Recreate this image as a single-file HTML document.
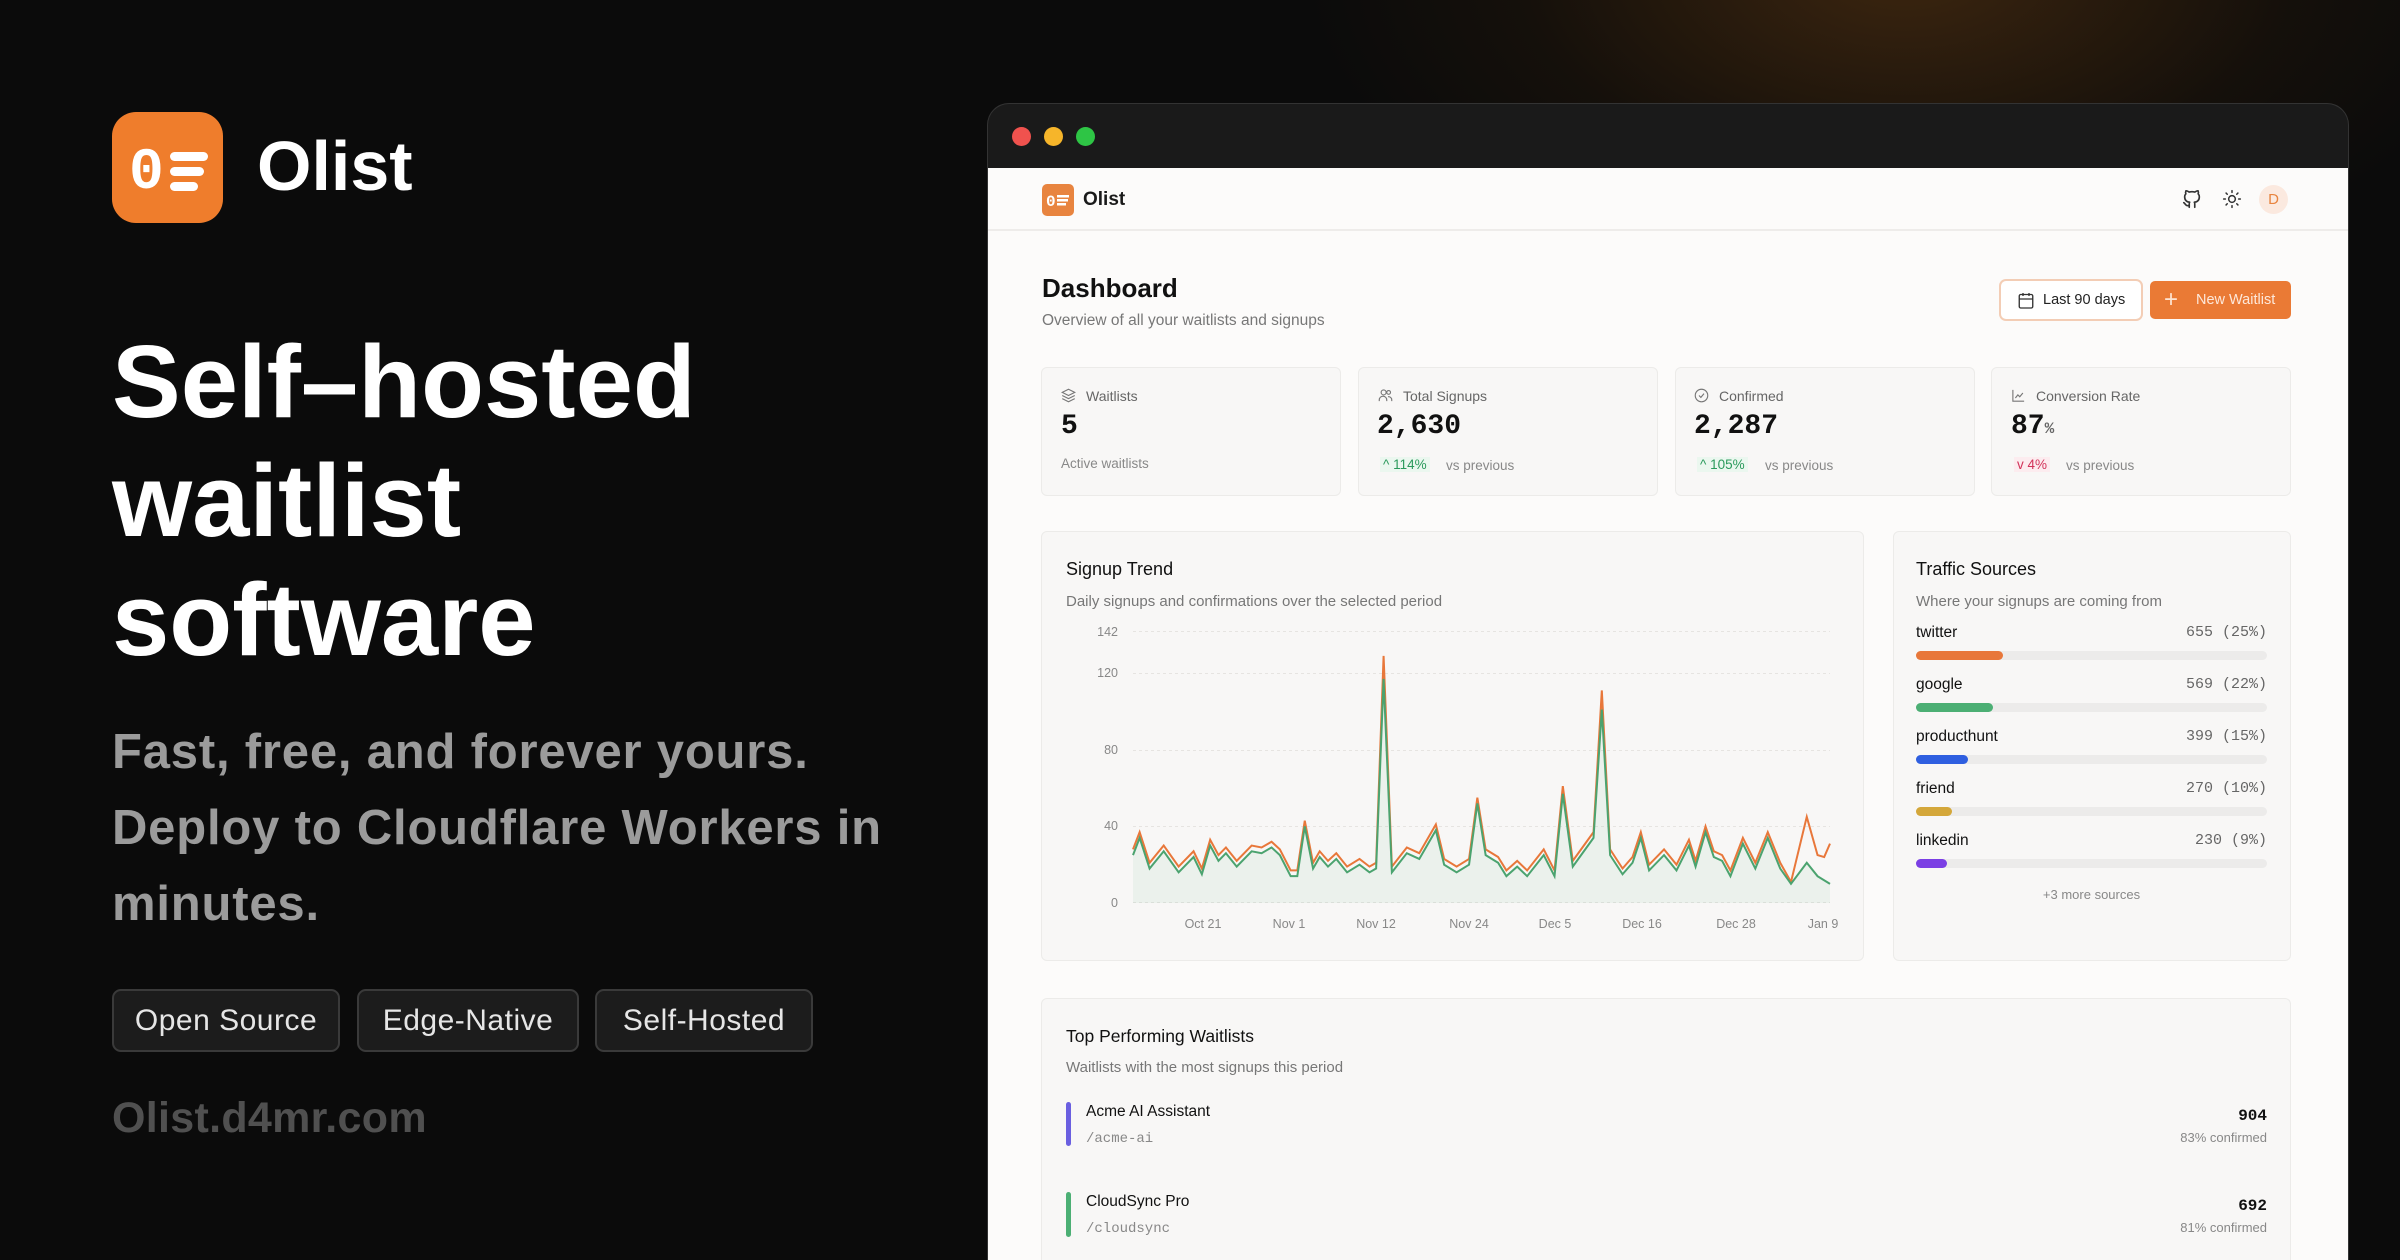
<!DOCTYPE html>
<html><head><meta charset="utf-8">
<style>
*{margin:0;padding:0;box-sizing:border-box}
html{width:2400px;height:1260px;overflow:hidden}
body{width:2400px;height:1260px;overflow:hidden;background:#0b0b0b;font-family:"Liberation Sans",sans-serif;position:relative}
.glow{position:absolute;left:1300px;top:-300px;width:1100px;height:600px;background:radial-gradient(ellipse at 55% 45%,rgba(120,70,20,0.45),rgba(60,35,10,0.2) 45%,rgba(0,0,0,0) 70%)}
.a{position:absolute}
.logo{left:112px;top:112px;width:111px;height:111px;background:#ef7d2c;border-radius:24px}
.brand{left:257px;top:126px;font-size:70px;color:#fff;font-weight:bold;letter-spacing:0px}
.h1{left:112px;top:322px;font-size:103px;line-height:119px;font-weight:bold;color:#fff;letter-spacing:0px}
.sub{left:112px;top:714px;font-size:49px;line-height:76px;color:#9b9b9b;font-weight:bold;letter-spacing:0.8px}
.pill{top:989px;height:63px;border:2px solid #3a3a3a;background:#1c1c1c;border-radius:9px;color:#e6e6e6;font-size:30px;line-height:59px;text-align:center;letter-spacing:0.5px}
.url{left:112px;top:1094px;font-size:43px;color:#505050;font-weight:bold;letter-spacing:0.3px}
.win{left:987px;top:103px;width:1362px;height:1157px;background:#1a1a1a;border-radius:22px 22px 0 0;border:1px solid #333;border-bottom:none;overflow:hidden}
.dot{top:127px;width:19px;height:19px;border-radius:50%}
.page{left:988px;top:168px;width:1360px;height:1092px;background:#fcfbfa}
.hdr{left:988px;top:168px;width:1360px;height:63px;border-bottom:2px solid #eeecea}
.card{background:#f8f7f6;border:1.5px solid #ecebe9;border-radius:6px}
.lbl{font-size:14px;color:#666}
.mono{font-family:"Liberation Mono",monospace}
</style></head><body>
<div class="glow"></div>
<div class="a logo">
<svg width="111" height="111" viewBox="0 0 111 111"><text x="17" y="76" font-family="Liberation Mono" font-weight="bold" font-size="58" fill="#fff">0</text><rect x="58" y="40" width="38" height="9" rx="4.5" fill="#fff"/><rect x="58" y="55" width="34" height="9" rx="4.5" fill="#fff"/><rect x="58" y="70" width="28" height="9" rx="4.5" fill="#fff"/></svg>
</div>
<div class="a brand">Olist</div>
<div class="a h1">Self–hosted<br>waitlist<br>software</div>
<div class="a sub">Fast, free, and forever yours.<br>Deploy to Cloudflare Workers in<br>minutes.</div>
<div class="a pill" style="left:112px;width:228px">Open Source</div>
<div class="a pill" style="left:357px;width:222px">Edge-Native</div>
<div class="a pill" style="left:595px;width:218px">Self-Hosted</div>
<div class="a url">Olist.d4mr.com</div>

<div class="a win"></div>
<div class="a dot" style="left:1012px;background:#f0524e"></div>
<div class="a dot" style="left:1044px;background:#f6b52a"></div>
<div class="a dot" style="left:1076px;background:#2ec545"></div>
<div class="a page"></div>
<div class="a hdr"></div>
<div class="a" style="left:1042px;top:184px;width:32px;height:32px;background:#e8843f;border-radius:5px">
<svg width="32" height="32"><text x="4" y="22" font-family="Liberation Mono" font-weight="bold" font-size="16" fill="#fff">0</text><rect x="15" y="11" width="12" height="2.5" fill="#fff"/><rect x="15" y="15" width="11" height="2.5" fill="#fff"/><rect x="15" y="19" width="9" height="2.5" fill="#fff"/></svg></div>
<div class="a" style="left:1083px;top:189px;font-size:19px;font-weight:bold;color:#1a1a1a">Olist</div>
<svg class="a" style="left:2181px;top:188px" width="22" height="22" viewBox="0 0 24 24" fill="none" stroke="#333" stroke-width="1.8" stroke-linecap="round" stroke-linejoin="round"><path d="M9 19c-4.3 1.4-4.3-2.5-6-3m12 5v-3.5c0-1 .1-1.4-.5-2 2.8-.3 5.5-1.4 5.5-6a4.6 4.6 0 0 0-1.3-3.2 4.2 4.2 0 0 0-.1-3.2s-1.1-.3-3.5 1.3a12.3 12.3 0 0 0-6.2 0C6.5 2.8 5.4 3.1 5.4 3.1a4.2 4.2 0 0 0-.1 3.2A4.6 4.6 0 0 0 4 9.5c0 4.6 2.7 5.7 5.5 6-.6.6-.6 1.2-.5 2V21"/></svg>
<svg class="a" style="left:2222px;top:189px" width="20" height="20" viewBox="0 0 24 24" fill="none" stroke="#333" stroke-width="1.8" stroke-linecap="round"><circle cx="12" cy="12" r="4"/><path d="M12 2v2M12 20v2M4.9 4.9l1.4 1.4M17.7 17.7l1.4 1.4M2 12h2M20 12h2M4.9 19.1l1.4-1.4M17.7 6.3l1.4-1.4"/></svg>
<div class="a" style="left:2259px;top:185px;width:29px;height:29px;border-radius:50%;background:#fbe9df;color:#e8843f;font-size:15px;text-align:center;line-height:29px">D</div>

<div class="a" style="left:1042px;top:273px;font-size:26px;font-weight:bold;color:#111">Dashboard</div>
<div class="a" style="left:1042px;top:312px;font-size:15.5px;color:#777">Overview of all your waitlists and signups</div>
<div class="a" style="left:1999px;top:279px;width:144px;height:42px;border:2px solid #f3cdb5;border-radius:7px;background:#fff"></div>
<svg class="a" style="left:2017px;top:291px" width="18" height="19" viewBox="0 0 24 24" fill="none" stroke="#333" stroke-width="1.8"><rect x="3" y="4" width="18" height="18" rx="2"/><path d="M16 2v4M8 2v4M3 10h18"/></svg>
<div class="a" style="left:2043px;top:292px;font-size:14.5px;color:#222">Last 90 days</div>
<div class="a" style="left:2150px;top:281px;width:141px;height:38px;background:#ea7a35;border-radius:5px"></div>
<div class="a" style="left:2164px;top:286px;font-size:24px;color:#fde3d2">+</div>
<div class="a" style="left:2196px;top:292px;font-size:14.5px;color:#fde8da">New Waitlist</div>

<div class="a card" style="left:1041px;top:367px;width:300px;height:129px"></div>
<div class="a card" style="left:1358px;top:367px;width:300px;height:129px"></div>
<div class="a card" style="left:1675px;top:367px;width:300px;height:129px"></div>
<div class="a card" style="left:1991px;top:367px;width:300px;height:129px"></div>
<svg class="a" style="left:1061px;top:388px" width="15" height="15" viewBox="0 0 24 24" fill="none" stroke="#777" stroke-width="1.8"><path d="M12 2 2 7l10 5 10-5zM2 12l10 5 10-5M2 17l10 5 10-5"/></svg>
<div class="a lbl" style="left:1086px;top:388px">Waitlists</div>
<div class="a mono" style="left:1061px;top:411px;font-size:28px;font-weight:bold;color:#111">5</div>
<div class="a" style="left:1061px;top:456px;font-size:13.5px;color:#888">Active waitlists</div>

<svg class="a" style="left:1378px;top:388px" width="15" height="15" viewBox="0 0 24 24" fill="none" stroke="#777" stroke-width="1.8"><circle cx="9" cy="7" r="4"/><circle cx="17" cy="7" r="3"/><path d="M2 21v-2a6 6 0 0 1 12 0v2M16 14a5 5 0 0 1 6 5v2"/></svg>
<div class="a lbl" style="left:1403px;top:388px">Total Signups</div>
<div class="a mono" style="left:1377px;top:411px;font-size:28px;font-weight:bold;color:#111">2,630</div>
<div class="a" style="left:1380px;top:457px;font-size:13.5px;color:#2b9a5c;background:#ebf7ef;padding:0 3px">^ 114%</div>
<div class="a" style="left:1446px;top:458px;font-size:13.5px;color:#888">vs previous</div>

<svg class="a" style="left:1694px;top:388px" width="15" height="15" viewBox="0 0 24 24" fill="none" stroke="#777" stroke-width="1.8"><circle cx="12" cy="12" r="10"/><path d="m8 12 3 3 5-6"/></svg>
<div class="a lbl" style="left:1719px;top:388px">Confirmed</div>
<div class="a mono" style="left:1694px;top:411px;font-size:28px;font-weight:bold;color:#111">2,287</div>
<div class="a" style="left:1697px;top:457px;font-size:13.5px;color:#2b9a5c;background:#ebf7ef;padding:0 3px">^ 105%</div>
<div class="a" style="left:1765px;top:458px;font-size:13.5px;color:#888">vs previous</div>

<svg class="a" style="left:2011px;top:388px" width="15" height="15" viewBox="0 0 24 24" fill="none" stroke="#777" stroke-width="1.8"><path d="M3 3v18h18M7 16l4-5 3 3 5-6"/></svg>
<div class="a lbl" style="left:2036px;top:388px">Conversion Rate</div>
<div class="a mono" style="left:2011px;top:411px;font-size:28px;font-weight:bold;color:#111">87<span style="font-size:16px;color:#666">%</span></div>
<div class="a" style="left:2014px;top:457px;font-size:13.5px;color:#d2335a;background:#fcecef;padding:0 3px">v 4%</div>
<div class="a" style="left:2066px;top:458px;font-size:13.5px;color:#888">vs previous</div>

<div class="a card" style="left:1041px;top:531px;width:823px;height:430px"></div>
<div class="a" style="left:1066px;top:559px;font-size:18px;color:#111">Signup Trend</div>
<div class="a" style="left:1066px;top:593px;font-size:15px;color:#777">Daily signups and confirmations over the selected period</div>
<div class="a" style="left:1080px;top:624px;width:38px;text-align:right;font-size:12.5px;color:#888;line-height:16px">142</div>
<div class="a" style="left:1080px;top:665px;width:38px;text-align:right;font-size:12.5px;color:#888;line-height:16px">120</div>
<div class="a" style="left:1080px;top:742px;width:38px;text-align:right;font-size:12.5px;color:#888;line-height:16px">80</div>
<div class="a" style="left:1080px;top:818px;width:38px;text-align:right;font-size:12.5px;color:#888;line-height:16px">40</div>
<div class="a" style="left:1080px;top:895px;width:38px;text-align:right;font-size:12.5px;color:#888;line-height:16px">0</div>
<svg class="a" style="left:1133px;top:631px" width="697" height="272">
<g stroke="#e6e4e1" stroke-dasharray="3 3" stroke-width="1"><line x1="0" y1="0.5" x2="697" y2="0.5"/><line x1="0" y1="42.5" x2="697" y2="42.5"/><line x1="0" y1="119.5" x2="697" y2="119.5"/><line x1="0" y1="195.5" x2="697" y2="195.5"/><line x1="0" y1="271.5" x2="697" y2="271.5"/></g>
</svg>
<svg class="a" style="left:1133px;top:631px;overflow:visible" width="697" height="272" viewBox="0 -142 840 142" preserveAspectRatio="none">
<polygon fill="rgba(76,175,116,0.07)" points="0,0 0,-25 8,-34 20,-18 37,-27 55,-16 73,-24 83,-15 93,-30 103,-22 112,-26 125,-19 143,-27 155,-26 167,-29 177,-25 190,-14 198,-14 207,-40 217,-18 225,-24 235,-19 245,-23 258,-16 273,-20 285,-16 293,-18 302,-117 312,-16 330,-26 345,-23 365,-38 375,-20 390,-16 405,-20 415,-52 425,-25 440,-21 450,-14 463,-19 475,-14 495,-25 508,-14 518,-57 530,-19 540,-25 555,-34 565,-101 575,-25 590,-15 602,-21 612,-34 622,-17 640,-25 655,-17 670,-30 678,-19 690,-37 700,-24 710,-22 720,-14 735,-31 750,-18 765,-34 780,-18 793,-10 812,-21 825,-14 840,-10 840,0"/>
<polyline fill="none" stroke="#e8773a" stroke-width="2" vector-effect="non-scaling-stroke" points="0,-28 8,-37 20,-21 37,-30 55,-19 73,-27 83,-18 93,-33 103,-25 112,-29 125,-22 143,-30 155,-29 167,-32 177,-28 190,-17 198,-17 207,-43 217,-21 225,-27 235,-22 245,-26 258,-19 273,-23 285,-19 293,-21 302,-129 312,-19 330,-29 345,-26 365,-41 375,-23 390,-19 405,-23 415,-55 425,-28 440,-24 450,-17 463,-22 475,-17 495,-28 508,-17 518,-61 530,-22 540,-28 555,-37 565,-111 575,-28 590,-18 602,-24 612,-37 622,-20 640,-28 655,-20 670,-33 678,-22 690,-40 700,-27 710,-25 720,-17 735,-34 750,-21 765,-37 780,-21 793,-11 812,-45 825,-25 833,-24 840,-31"/>
<polyline fill="none" stroke="#4ba36f" stroke-width="2" vector-effect="non-scaling-stroke" points="0,-25 8,-34 20,-18 37,-27 55,-16 73,-24 83,-15 93,-30 103,-22 112,-26 125,-19 143,-27 155,-26 167,-29 177,-25 190,-14 198,-14 207,-40 217,-18 225,-24 235,-19 245,-23 258,-16 273,-20 285,-16 293,-18 302,-117 312,-16 330,-26 345,-23 365,-38 375,-20 390,-16 405,-20 415,-52 425,-25 440,-21 450,-14 463,-19 475,-14 495,-25 508,-14 518,-57 530,-19 540,-25 555,-34 565,-101 575,-25 590,-15 602,-21 612,-34 622,-17 640,-25 655,-17 670,-30 678,-19 690,-37 700,-24 710,-22 720,-14 735,-31 750,-18 765,-34 780,-18 793,-10 812,-21 825,-14 840,-10"/>
</svg>
<div class="a" style="left:1173px;top:917px;width:60px;text-align:center;font-size:12.5px;color:#888">Oct 21</div>
<div class="a" style="left:1259px;top:917px;width:60px;text-align:center;font-size:12.5px;color:#888">Nov 1</div>
<div class="a" style="left:1346px;top:917px;width:60px;text-align:center;font-size:12.5px;color:#888">Nov 12</div>
<div class="a" style="left:1439px;top:917px;width:60px;text-align:center;font-size:12.5px;color:#888">Nov 24</div>
<div class="a" style="left:1525px;top:917px;width:60px;text-align:center;font-size:12.5px;color:#888">Dec 5</div>
<div class="a" style="left:1612px;top:917px;width:60px;text-align:center;font-size:12.5px;color:#888">Dec 16</div>
<div class="a" style="left:1706px;top:917px;width:60px;text-align:center;font-size:12.5px;color:#888">Dec 28</div>
<div class="a" style="left:1793px;top:917px;width:60px;text-align:center;font-size:12.5px;color:#888">Jan 9</div>

<div class="a card" style="left:1893px;top:531px;width:398px;height:430px"></div>
<div class="a" style="left:1916px;top:559px;font-size:18px;color:#111">Traffic Sources</div>
<div class="a" style="left:1916px;top:593px;font-size:15px;color:#777">Where your signups are coming from</div>

<div class="a" style="left:1916px;top:624px;font-size:15.5px;color:#111">twitter</div>
<div class="a mono" style="left:2100px;top:624px;width:167px;text-align:right;font-size:15px;color:#666">655 (25%)</div>
<div class="a" style="left:1916px;top:651px;width:351px;height:9px;background:#ecebea;border-radius:5px"><div style="width:87px;height:9px;background:#e8773a;border-radius:5px"></div></div>

<div class="a" style="left:1916px;top:676px;font-size:15.5px;color:#111">google</div>
<div class="a mono" style="left:2100px;top:676px;width:167px;text-align:right;font-size:15px;color:#666">569 (22%)</div>
<div class="a" style="left:1916px;top:703px;width:351px;height:9px;background:#ecebea;border-radius:5px"><div style="width:77px;height:9px;background:#4caf74;border-radius:5px"></div></div>

<div class="a" style="left:1916px;top:728px;font-size:15.5px;color:#111">producthunt</div>
<div class="a mono" style="left:2100px;top:728px;width:167px;text-align:right;font-size:15px;color:#666">399 (15%)</div>
<div class="a" style="left:1916px;top:755px;width:351px;height:9px;background:#ecebea;border-radius:5px"><div style="width:52px;height:9px;background:#2f5fe0;border-radius:5px"></div></div>

<div class="a" style="left:1916px;top:780px;font-size:15.5px;color:#111">friend</div>
<div class="a mono" style="left:2100px;top:780px;width:167px;text-align:right;font-size:15px;color:#666">270 (10%)</div>
<div class="a" style="left:1916px;top:807px;width:351px;height:9px;background:#ecebea;border-radius:5px"><div style="width:36px;height:9px;background:#d4a73a;border-radius:5px"></div></div>

<div class="a" style="left:1916px;top:832px;font-size:15.5px;color:#111">linkedin</div>
<div class="a mono" style="left:2100px;top:832px;width:167px;text-align:right;font-size:15px;color:#666">230 (9%)</div>
<div class="a" style="left:1916px;top:859px;width:351px;height:9px;background:#ecebea;border-radius:5px"><div style="width:31px;height:9px;background:#7b3fe4;border-radius:5px"></div></div>

<div class="a" style="left:1916px;top:887px;width:351px;text-align:center;font-size:13px;color:#888">+3 more sources</div>

<div class="a card" style="left:1041px;top:998px;width:1250px;height:262px;border-bottom:none;border-radius:6px 6px 0 0"></div>
<div class="a" style="left:1066px;top:1026px;font-size:17.5px;color:#111">Top Performing Waitlists</div>
<div class="a" style="left:1066px;top:1059px;font-size:15px;color:#777">Waitlists with the most signups this period</div>
<div class="a" style="left:1066px;top:1102px;width:5px;height:44px;background:#6a5fe0;border-radius:3px"></div>
<div class="a" style="left:1086px;top:1103px;font-size:15.5px;color:#111">Acme AI Assistant</div>
<div class="a mono" style="left:1086px;top:1131px;font-size:14px;color:#888">/acme-ai</div>
<div class="a mono" style="left:2100px;top:1107px;width:167px;text-align:right;font-size:16px;font-weight:bold;color:#111">904</div>
<div class="a" style="left:2100px;top:1130px;width:167px;text-align:right;font-size:13px;color:#888">83% confirmed</div>
<div class="a" style="left:1066px;top:1192px;width:5px;height:45px;background:#4caf74;border-radius:3px"></div>
<div class="a" style="left:1086px;top:1193px;font-size:15.5px;color:#111">CloudSync Pro</div>
<div class="a mono" style="left:1086px;top:1221px;font-size:14px;color:#888">/cloudsync</div>
<div class="a mono" style="left:2100px;top:1197px;width:167px;text-align:right;font-size:16px;font-weight:bold;color:#111">692</div>
<div class="a" style="left:2100px;top:1220px;width:167px;text-align:right;font-size:13px;color:#888">81% confirmed</div>
</body></html>
